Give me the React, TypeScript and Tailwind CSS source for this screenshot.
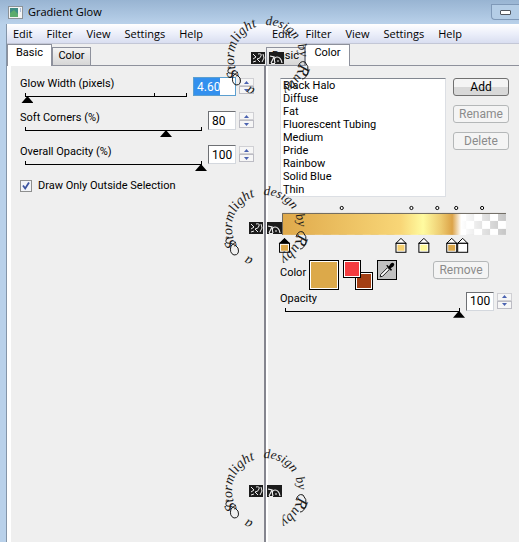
import React from "react";
import clsx from "clsx";

const presets = [
  "Black Halo",
  "Diffuse",
  "Fat",
  "Fluorescent Tubing",
  "Medium",
  "Pride",
  "Rainbow",
  "Solid Blue",
  "Thin",
];

const menuItems = ["Edit", "Filter", "View", "Settings", "Help"];

const midpoints = [60, 130, 156, 175, 201];

const stops = [
  { x: 2, color: "#dca748", active: true },
  { x: 119, color: "#f6d070", active: false },
  { x: 142, color: "#fff99a", active: false },
  { x: 170, color: "#dca748", active: false },
  { x: 181, color: "#ffffff", active: false },
];

function MenuBar() {
  return (
    <nav className="flex h-5 items-center gap-[14px] border-b border-[#c3c7d6] bg-linear-to-b from-white via-[#eceffa] to-[#d9def0] pl-[6px] font-['Open_Sans',sans-serif] text-[11px] text-black">
      {menuItems.map((item) => (
        <button key={item} type="button" className="leading-4">
          {item}
        </button>
      ))}
    </nav>
  );
}

function Tabs({ active }: { active: "Basic" | "Color" }) {
  return (
    <div role="tablist" className="flex h-[22px] items-end border-b border-[#8e919c]">
      {["Basic", "Color"].map((tab) => (
        <button
          key={tab}
          type="button"
          role="tab"
          aria-selected={tab === active}
          className={clsx(
            "border border-[#8e919c]",
            tab === active
              ? "-mb-px h-[22px] w-[45px] border-b-0 bg-white pb-1"
              : "h-[18px] w-[39px] border-b-0 bg-linear-to-b from-[#f4f4f4] to-[#d6d6d6]"
          )}
        >
          {tab}
        </button>
      ))}
    </div>
  );
}

function Spinner({ label }: { label: string }) {
  return (
    <div className="flex w-[15px] flex-col">
      <button
        type="button"
        aria-label={`Increase ${label}`}
        className="flex h-2 items-center justify-center border border-[#d0d0d4] bg-[#f6f6f6]"
      >
        <svg width="5" height="3" viewBox="0 0 5 3">
          <path d="M0 3L2.5 0L5 3Z" fill="#4a62b0" />
        </svg>
      </button>
      <button
        type="button"
        aria-label={`Decrease ${label}`}
        className="flex h-2 items-center justify-center border border-[#bcbcc4] bg-[#f6f6f6]"
      >
        <svg width="5" height="3" viewBox="0 0 5 3">
          <path d="M0 0L2.5 3L5 0Z" fill="#4a62b0" />
        </svg>
      </button>
    </div>
  );
}

interface SliderRowProps {
  id: string;
  label: string;
  value: number;
  max: number;
  text: string;
  wide?: boolean;
  onChange: (value: number) => void;
}

function SliderRow({ id, label, value, max, text, wide, onChange }: SliderRowProps) {
  return (
    <div className="flex h-[34px] items-start">
      <div className="flex-1">
        <label htmlFor={id} className="block h-4 leading-[14px]">
          {label}
        </label>
        <div className="relative mr-[6px] ml-[5px] h-[4px] border-x border-b border-black">
          {wide && <span className="absolute top-0 left-4/5 h-[3px] w-px bg-black" />}
          <input
            id={id}
            type="range"
            min={0}
            max={max}
            step="any"
            value={value}
            onChange={(e) => onChange(Number(e.target.value))}
            className="absolute top-[3px] -left-[6px] h-[7px] w-[calc(100%+12px)] appearance-none bg-transparent [&::-webkit-slider-thumb]:h-[7px] [&::-webkit-slider-thumb]:w-[12px] [&::-webkit-slider-thumb]:appearance-none [&::-webkit-slider-thumb]:bg-black [&::-webkit-slider-thumb]:[clip-path:polygon(50%_0,100%_100%,0_100%)]"
          />
        </div>
      </div>
      <input
        type="text"
        aria-label={`${label} value`}
        defaultValue={text}
        className={clsx(
          "h-[19px] border bg-white pl-[3px] text-[12px] outline-none",
          wide
            ? "w-[43px] border-[#5b9fd0] bg-linear-to-r from-[#3390ee] from-[26px] to-white to-[26px] text-white"
            : "w-7 border-[#d4d8de] border-t-[#6e7074] border-l-[#6e7074]"
        )}
      />
      <div className="mt-px ml-[3px]">
        <Spinner label={label} />
      </div>
    </div>
  );
}

function PushButton({ children, disabled }: { children: React.ReactNode; disabled?: boolean }) {
  return (
    <button
      type="button"
      disabled={disabled}
      className={clsx(
        "h-[18px] w-14 rounded-[3px] border text-[12px] leading-4",
        disabled
          ? "border-[#b4b7b8] bg-[#f4f4f4] text-[#8b8b8b]"
          : "border-[#707070] bg-linear-to-b from-[#f4f4f4] from-50% to-[#d8d8d8] to-50% text-black"
      )}
    >
      {children}
    </button>
  );
}

function GradientEditor() {
  return (
    <svg
      viewBox="0 0 226 50"
      className="block w-full overflow-visible"
      role="img"
      aria-label="Gradient"
    >
      <defs>
        <linearGradient id="glow">
          <stop offset="0" stopColor="#dfa94b" />
          <stop offset="0.53" stopColor="#f8d677" />
          <stop offset="0.63" stopColor="#fffba0" />
          <stop offset="0.71" stopColor="#edcb70" />
          <stop offset="0.76" stopColor="#dca347" />
          <stop offset="0.8" stopColor="#fff" />
          <stop offset="1" stopColor="#fff" stopOpacity="0" />
        </linearGradient>
        <pattern id="checks" width="16" height="16" patternUnits="userSpaceOnUse" x="177" y="8">
          <rect width="16" height="16" fill="#fff" />
          <path d="M8 0h8v8h-8zM0 8h8v8h-8z" fill="#c6c6c6" />
        </pattern>
      </defs>
      {midpoints.map((x) => (
        <circle key={x} cx={x} cy="3" r="1.6" fill="#fff" stroke="#000" />
      ))}
      <rect y="8" width="225" height="22" fill="url(#checks)" />
      <rect y="8" width="225" height="22" fill="url(#glow)" />
      <path d="M0.5 30V8.5H225" fill="none" stroke="#6e6a62" />
      {stops.map(({ x, color, active }) => (
        <g key={x} transform={`translate(${x} 33)`} stroke="#000">
          <path d="M-4.5 5.5L0.5 0.5L5.5 5.5Z" fill={active ? "#000" : "#fff"} />
          <rect x="-4.5" y="5.5" width="10" height="9" fill="#fff" />
          <rect x="-3" y="7" width="7" height="6" fill={color} stroke="none" />
        </g>
      ))}
    </svg>
  );
}

function Eyedropper() {
  return (
    <svg width="20" height="20" viewBox="0 0 20 20">
      <path
        d="M2.5 17.5L3 15L10.5 7.5L12.5 9.5L5 17Z"
        fill="#fff"
        stroke="#000"
        strokeLinejoin="round"
      />
      <path d="M9 5L10.5 4.5L12 6L14 3Q16 1 17.5 2.5T17 6L14 8L15.5 9.5L14.5 11Z" fill="#000" />
    </svg>
  );
}

function Watermark({ id }: { id: string }) {
  return (
    <svg
      width="96"
      height="96"
      viewBox="-48 -48 96 96"
      className="overflow-visible font-['Liberation_Serif',serif] text-[14px] italic"
      fill="#1c1c1c"
    >
      <path id={id} d="M0 33A33 33 0 0 1 0 -33A33 33 0 0 1 0 33" fill="none" />
      <text>
        <textPath href={`#${id}`} startOffset="12">a</textPath>
      </text>
      <text>
        <textPath href={`#${id}`} startOffset="33">
          <tspan className="text-[16px]">S</tspan>tormlight
        </textPath>
      </text>
      <text className="text-[13px]">
        <textPath href={`#${id}`} startOffset="102">design</textPath>
      </text>
      <text className="text-[13px]">
        <textPath href={`#${id}`} startOffset="142">by</textPath>
      </text>
      <text>
        <textPath href={`#${id}`} startOffset="161">
          <tspan className="text-[17px]">R</tspan>uby
        </textPath>
      </text>
      {/* Swashes on the two capitals */}
      <path
        d="M-36 9Q-41 12 -38 15Q-31 15 -27 20Q-25 27 -31 27Q-36 25 -34 18Q-31 15 -29 14M31 9Q33 2 38 4Q42 8 41 14Q39 21 35 21"
        fill="none"
        stroke="#1c1c1c"
      />
      <path d="M-16 -6H-2V6H-16Z" />
      <path
        d="M-14 -4L-11 -1L-14 1M-9 -4Q-5 -5 -6 -2T-10 1L-7 4M-14 4L-11 3M-4 -4L-3 0L-5 4"
        fill="none"
        stroke="#eee"
      />
      <path d="M2 -6H17V6H2Z" />
      <path
        d="M3 -2L7 -1L4 5M8 5Q6 -1 10 -1T15 5M10 3h2M4 5.5h4"
        fill="none"
        stroke="#eee"
        strokeWidth="1.2"
      />
    </svg>
  );
}

export default function App() {
  const [glowWidth, setGlowWidth] = React.useState(4.6);
  const [corners, setCorners] = React.useState(80);
  const [overall, setOverall] = React.useState(100);
  const [opacity, setOpacity] = React.useState(100);

  return (
    <div className="relative flex min-h-screen flex-col overflow-hidden bg-[#b9d1ea] font-[Roboto,'Liberation_Sans',sans-serif] text-[11px] text-black">
      {/* Title bar */}
      <header className="flex h-6 items-center bg-linear-to-b from-[#98b4d2] to-[#b9d1ea] pl-2">
        <svg width="15" height="13" viewBox="0 0 15 13">
          <rect x="0.5" y="0.5" width="14" height="12" fill="#f4f4f4" stroke="#8b9298" />
          <rect x="2" y="2" width="8" height="9" fill="#3f8c84" />
          <path d="M2 11V7L6 4L10 8V11Z" fill="#5cab6c" />
          <path d="M12 3h1M12 5h1" stroke="#6688bb" />
        </svg>
        <h1 className="ml-[5px] flex-1 font-['Open_Sans',sans-serif] text-[11px]">Gradient Glow</h1>
        <button
          type="button"
          aria-label="Minimize"
          className="flex h-4 w-7 items-center justify-center rounded-bl border border-r-0 border-[#7f99b8] bg-[#b4cde6]"
        >
          <span className="h-[5px] w-[11px] rounded-[1px] border border-[#50565e] bg-white" />
        </button>
      </header>

      <div className="ml-[6px] grid flex-1 grid-cols-[259fr_253fr] border-l border-[#8495a8] bg-[#efefef]">
        {/* Basic settings */}
        <section className="flex flex-col">
          <MenuBar />
          <Tabs active="Basic" />
          <div className="flex-1 border-r-2 border-l-4 border-r-[#85868f] border-l-white pt-[11px] pr-[10px] pl-[9px]">
            <SliderRow
              id="glow-width"
              label="Glow Width (pixels)"
              value={glowWidth}
              max={500}
              text="4.60"
              wide
              onChange={setGlowWidth}
            />
            <SliderRow
              id="soft-corners"
              label="Soft Corners (%)"
              value={corners}
              max={100}
              text="80"
              onChange={setCorners}
            />
            <SliderRow
              id="overall-opacity"
              label="Overall Opacity (%)"
              value={overall}
              max={100}
              text="100"
              onChange={setOverall}
            />
            <label className="flex items-center gap-[6px] leading-[14px]">
              <span className="relative flex size-3">
                <input
                  type="checkbox"
                  defaultChecked
                  className="peer size-3 appearance-none border border-[#8e8f8f] bg-[#f2f4f8]"
                />
                <svg
                  className="pointer-events-none absolute inset-0 hidden peer-checked:block"
                  width="12"
                  height="12"
                  viewBox="0 0 12 12"
                >
                  <path d="M3 5.5L5.2 8.5L9 2.5" fill="none" stroke="#3c54a0" strokeWidth="1.8" />
                </svg>
              </span>
              Draw Only Outside Selection
            </label>
          </div>
        </section>

        {/* Color settings */}
        <section className="flex flex-col">
          <MenuBar />
          <Tabs active="Color" />
          <div className="flex-1 border-l-2 border-white pt-3 pr-[7px] pl-3">
            <div className="flex gap-[7px]">
              <select
                size={9}
                aria-label="Presets"
                className="h-[119px] flex-1 appearance-none overflow-hidden border border-[#dcdfe4] border-t-[#828790] bg-white"
              >
                {presets.map((preset) => (
                  <option key={preset} className="h-[13px] min-h-0 px-[2px] py-0 leading-[13px]">
                    {preset}
                  </option>
                ))}
              </select>
              <div className="mr-[3px] flex flex-col gap-[9px]">
                <PushButton>Add</PushButton>
                <PushButton disabled>Rename</PushButton>
                <PushButton disabled>Delete</PushButton>
              </div>
            </div>

            <div className="mt-2 mr-[5px] ml-[2px]">
              <GradientEditor />
            </div>

            <div className="mt-[5px] flex items-start">
              <span className="w-[29px] pt-[5px]">Color</span>
              <button
                type="button"
                aria-label="Current color"
                className="size-[30px] border border-black bg-[#dca94a] shadow-[inset_0_0_0_1px_white]"
              />
              <span className="ml-1 grid h-[30px] w-[30px]">
                <button
                  type="button"
                  aria-label="Foreground color"
                  className="z-10 col-start-1 row-start-1 size-[18px] border border-black bg-[#f43c40] shadow-[inset_0_0_0_1px_white]"
                />
                <button
                  type="button"
                  aria-label="Background color"
                  className="col-start-1 row-start-1 size-[18px] self-end justify-self-end border border-black bg-[#a33f14] shadow-[inset_0_0_0_1px_white]"
                />
              </span>
              <button
                type="button"
                aria-label="Pick color"
                className="ml-1 flex size-5 items-center justify-center border border-black bg-[#c0c0c0]"
              >
                <Eyedropper />
              </button>
              <div className="mt-px mr-[23px] ml-auto">
                <PushButton disabled>Remove</PushButton>
              </div>
            </div>

            <div className="mt-[2px]">
              <SliderRow
                id="opacity"
                label="Opacity"
                value={opacity}
                max={100}
                text="100"
                onChange={setOpacity}
              />
            </div>
          </div>
        </section>
      </div>

      {/* Signature rings sit over both panes */}
      <div className="pointer-events-none absolute top-[10px] left-[219px]">
        <Watermark id="ring-top" />
      </div>
      <div className="pointer-events-none absolute top-[180px] left-[217px]">
        <Watermark id="ring-middle" />
      </div>
      <div className="pointer-events-none absolute top-[443px] left-[217px]">
        <Watermark id="ring-bottom" />
      </div>
    </div>
  );
}
